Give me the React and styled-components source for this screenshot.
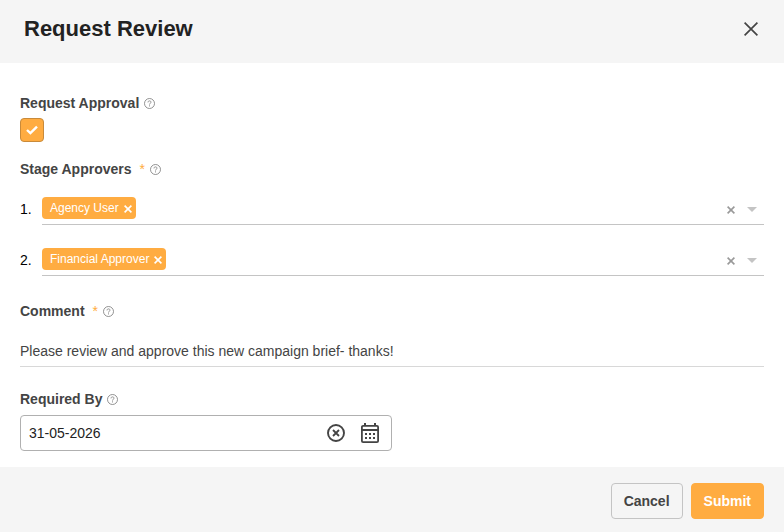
import React, { useState } from "react"
import styled, { createGlobalStyle } from "styled-components"

const GlobalStyle = createGlobalStyle`
  * {
    box-sizing: border-box;
  }
  body {
    margin: 0;
    background-color: #ffffff;
    color: #444444;
    font-family: "Liberation Sans", Arial, sans-serif;
    font-size: 14px;
    line-height: 20px;
  }
  button, input {
    margin: 0;
    font: inherit;
  }
`

const Header = styled.header`
  display: flex;
  align-items: center;
  justify-content: space-between;
  padding: 14px 26px 19px 24px;
  background-color: #f5f5f5;
`

const Title = styled.h1`
  margin: 0;
  color: #222222;
  font-size: 22px;
  line-height: 30px;
`

const IconButton = styled.button`
  display: flex;
  padding: 0;
  border: 0;
  background: none;
  color: ${props => props.$color || "#444444"};
  cursor: pointer;
`

const Body = styled.div`
  padding: 30px 20px 16px;
`

const Field = styled.div`
  margin-bottom: ${props => props.$gap || 0}px;
`

const LabelRow = styled.div`
  display: flex;
  align-items: center;
  gap: 5px;
  padding-bottom: 5px;
`

const Label = styled.label`
  font-weight: bold;
`

const Required = styled.span`
  margin-left: 3px;
  color: #ffac41;
`

const CheckWrap = styled.div`
  display: grid;
  width: 24px;
  height: 24px;

  > * {
    grid-area: 1 / 1;
    place-self: center;
  }

  svg {
    pointer-events: none;
  }
`

const Checkbox = styled.input`
  width: 24px;
  height: 24px;
  appearance: none;
  border: 1px solid #c98a3a;
  border-radius: 4px;
  background-color: #ffffff;

  &:checked {
    background-color: #ffac41;
  }
`

const StageList = styled.ol`
  display: grid;
  gap: 15px;
  margin: 0;
  padding: 5px 0 0;
  list-style: none;
`

const Stage = styled.li`
  display: flex;
  align-items: center;
  color: #000000;
`

const StageNumber = styled.span`
  width: 22px;
  padding-top: 4px;
`

const Select = styled.div`
  display: flex;
  flex: 1;
  align-items: center;
  height: 36px;
  padding-right: 7px;
  border-bottom: 1px solid #c4c4c4;
`

const Tag = styled.span`
  display: flex;
  align-items: center;
  gap: 5px;
  height: 22px;
  margin-top: 3px;
  padding: 0 4px 0 8px;
  border-radius: 4px;
  background-color: #ffac41;
  color: #ffffff;
  font-size: 12px;
  white-space: nowrap;

  button {
    padding-top: 2px;
  }
`

const SelectInput = styled.input`
  flex: 1;
  min-width: 0;
  border: 0;
  outline: 0;
  background: none;
`

const SelectActions = styled.div`
  display: flex;
  align-items: center;
  gap: 12px;
  padding-top: 6px;
`

const CommentInput = styled.input`
  display: block;
  width: 100%;
  height: 41px;
  padding: 10px 0 0;
  border: 0;
  border-bottom: 1px solid #d8d8d8;
  outline: 0;
  background: none;
  color: #444444;
`

const DateBox = styled.div`
  display: flex;
  align-items: center;
  gap: 16px;
  width: 50%;
  height: 36px;
  margin-top: 1px;
  padding: 0 12px 0 8px;
  border: 1px solid #b0b0b0;
  border-radius: 4px;
`

const DateInput = styled.input`
  flex: 1;
  min-width: 0;
  padding: 0;
  border: 0;
  outline: 0;
  background: none;
  color: #222222;
`

const Footer = styled.footer`
  display: flex;
  justify-content: flex-end;
  gap: 8px;
  padding: 16px 20px 13px;
  background-color: #f5f5f5;
`

const Button = styled.button`
  height: 36px;
  padding: 0 12px;
  border: 1px solid ${props => (props.$primary ? "#ffac41" : "#c4c4c4")};
  border-radius: 4px;
  background-color: ${props => (props.$primary ? "#ffac41" : "transparent")};
  color: ${props => (props.$primary ? "#ffffff" : "#444444")};
  font-weight: bold;
  cursor: pointer;
`

const Cross = ({ size, stroke }) =>
  <svg width={size} height={size} viewBox={`0 0 ${size} ${size}`} aria-hidden="true">
    <path
      d={`M0.6 0.6L${size - 0.6} ${size - 0.6}M${size - 0.6} 0.6L0.6 ${size - 0.6}`}
      stroke="currentColor"
      strokeWidth={stroke}
    />
  </svg>

const HelpIcon = () =>
  <svg width="11" height="11" viewBox="0 0 11 11" fill="none" stroke="#777777" aria-hidden="true">
    <circle cx="5.5" cy="5.5" r="5" strokeWidth="0.8" />
    <path d="M4 4.4C4 3.4 4.6 2.9 5.5 2.9S7 3.4 7 4.2C7 5.2 5.5 5.2 5.5 6.6" strokeWidth="0.8" />
    <path d="M5.5 7.4V8.4" strokeWidth="0.9" />
  </svg>

const CheckIcon = () =>
  <svg width="12" height="10" viewBox="0 0 12 10" fill="none" aria-hidden="true">
    <path d="M1 5L4.4 8.2L11 1.6" stroke="#ffffff" strokeWidth="2.4" />
  </svg>

const ArrowIcon = () =>
  <svg width="10" height="5" viewBox="0 0 10 5" aria-hidden="true">
    <path d="M0 0H10L5 5Z" fill="currentColor" />
  </svg>

const ClearIcon = () =>
  <svg width="18" height="18" viewBox="0 0 18 18" fill="none" stroke="currentColor" aria-hidden="true">
    <circle cx="9" cy="9" r="8" strokeWidth="1.9" />
    <path d="M6 6L12 12M12 6L6 12" strokeWidth="1.8" />
  </svg>

const CalendarIcon = () =>
  <svg width="18" height="20" viewBox="0 0 18 20" fill="none" stroke="currentColor" aria-hidden="true">
    <rect x="0.9" y="2.9" width="16.2" height="16.2" rx="1.2" strokeWidth="1.8" />
    <path d="M1 7H17" strokeWidth="2" />
    <path d="M4 0V3M14 0V3" strokeWidth="2" />
    <path d="M4 11H6M8 11H10M12 11H14M4 15H6M8 15H10M12 15H14" strokeWidth="2" />
  </svg>

const FieldLabel = ({ htmlFor, required, children }) =>
  <LabelRow>
    <Label htmlFor={htmlFor}>
      {children}
    </Label>
    {required && <Required>*</Required>}
    <HelpIcon />
  </LabelRow>

const App = () => {
  const [approval, setApproval] = useState(true)
  const [stages, setStages] = useState(["Agency User", "Financial Approver"])
  const [comment, setComment] = useState(
    "Please review and approve this new campaign brief- thanks!",
  )
  const [date, setDate] = useState("31-05-2026")

  const clearStage = index =>
    setStages(stages.map((stage, i) => (i === index ? "" : stage)))

  return (
    <form onSubmit={e => e.preventDefault()}>
      <GlobalStyle />
      <Header>
        <Title>Request Review</Title>
        <IconButton type="button" aria-label="Close">
          <Cross size={14} stroke={1.7} />
        </IconButton>
      </Header>
      <Body>
        <Field $gap={17}>
          <FieldLabel htmlFor="approval">Request Approval</FieldLabel>
          <CheckWrap>
            <Checkbox
              id="approval"
              type="checkbox"
              checked={approval}
              onChange={e => setApproval(e.target.checked)}
            />
            {approval && <CheckIcon />}
          </CheckWrap>
        </Field>
        <Field $gap={25}>
          <FieldLabel htmlFor="stage-0" required>
            Stage Approvers
          </FieldLabel>
          <StageList>
            {stages.map((stage, i) =>
              <Stage key={i}>
                <StageNumber>{i + 1}.</StageNumber>
                <Select>
                  {stage &&
                    <Tag>
                      {stage}
                      <IconButton
                        type="button"
                        $color="#ffffff"
                        aria-label={`Remove ${stage}`}
                        onClick={() => clearStage(i)}>
                        <Cross size={8} stroke={1.6} />
                      </IconButton>
                    </Tag>}
                  <SelectInput
                    id={`stage-${i}`}
                    role="combobox"
                    aria-expanded="false"
                    aria-label={`Stage ${i + 1} approver`}
                  />
                  <SelectActions>
                    <IconButton
                      type="button"
                      $color="#999999"
                      aria-label="Clear"
                      onClick={() => clearStage(i)}>
                      <Cross size={8} stroke={1.6} />
                    </IconButton>
                    <IconButton type="button" $color="#c4c4c4" aria-label="Open">
                      <ArrowIcon />
                    </IconButton>
                  </SelectActions>
                </Select>
              </Stage>,
            )}
          </StageList>
        </Field>
        <Field $gap={22}>
          <FieldLabel htmlFor="comment" required>
            Comment
          </FieldLabel>
          <CommentInput
            id="comment"
            value={comment}
            onChange={e => setComment(e.target.value)}
          />
        </Field>
        <Field>
          <FieldLabel htmlFor="required-by">Required By</FieldLabel>
          <DateBox>
            <DateInput
              id="required-by"
              value={date}
              onChange={e => setDate(e.target.value)}
            />
            <IconButton type="button" aria-label="Clear date" onClick={() => setDate("")}>
              <ClearIcon />
            </IconButton>
            <IconButton type="button" aria-label="Open calendar">
              <CalendarIcon />
            </IconButton>
          </DateBox>
        </Field>
      </Body>
      <Footer>
        <Button type="button">Cancel</Button>
        <Button type="submit" $primary>
          Submit
        </Button>
      </Footer>
    </form>
  )
}

export default App
